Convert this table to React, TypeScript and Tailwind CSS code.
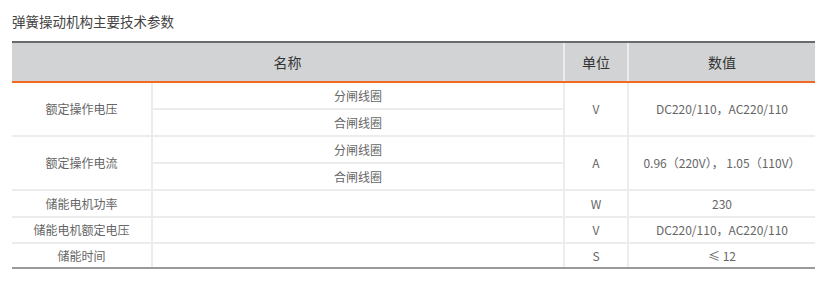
export default function App() {
  const cell = "bg-white flex items-center justify-center text-[12px] text-[#666]";
  return (
    <div className="w-[838px] h-[291px] bg-white font-['Noto_Sans_CJK_SC','Noto_Sans',sans-serif]">
      <div className="pl-[12px] pt-[11px] w-[815px]">
        {/* Title */}
        <h2 className="text-[13.5px] leading-[20px] text-[#444] font-normal">弹簧操动机构主要技术参数</h2>

        {/* Table */}
        <div className="mt-[10px] border-t-2 border-[#6b6b6b]">
          {/* Header */}
          <div className="grid grid-cols-[551px_62px_186px] gap-x-[2px] bg-[#ececec] border-b-2 border-[#f26a21]">
            <div className="bg-[#d2d3d5] h-[38px] flex items-center justify-center text-[14px] text-[#333]">名称</div>
            <div className="bg-[#d2d3d5] h-[38px] flex items-center justify-center text-[14px] text-[#333]">单位</div>
            <div className="bg-[#d2d3d5] h-[38px] flex items-center justify-center text-[14px] text-[#333]">数值</div>
          </div>

          {/* Body */}
          <div className="grid grid-cols-[139px_410px_62px_186px] grid-rows-[25px_25px_25px_25px_25px_24px_23px] gap-[2px] bg-[#ececec] border-b-2 border-[#9a9a9a]">
            <div className={`${cell} row-span-2`}>额定操作电压</div>
            <div className={cell}>分闸线圈</div>
            <div className={`${cell} row-span-2`}>V</div>
            <div className={`${cell} row-span-2`}>DC220/110，AC220/110</div>
            <div className={cell}>合闸线圈</div>

            <div className={`${cell} row-span-2`}>额定操作电流</div>
            <div className={cell}>分闸线圈</div>
            <div className={`${cell} row-span-2`}>A</div>
            <div className={`${cell} row-span-2`}>0.96（220V）， 1.05（110V）</div>
            <div className={cell}>合闸线圈</div>

            <div className={cell}>储能电机功率</div>
            <div className={cell}></div>
            <div className={cell}>W</div>
            <div className={cell}>230</div>

            <div className={cell}>储能电机额定电压</div>
            <div className={cell}></div>
            <div className={cell}>V</div>
            <div className={cell}>DC220/110，AC220/110</div>

            <div className={cell}>储能时间</div>
            <div className={cell}></div>
            <div className={cell}>S</div>
            <div className={cell}>≤ 12</div>
          </div>
        </div>
      </div>
    </div>
  );
}
